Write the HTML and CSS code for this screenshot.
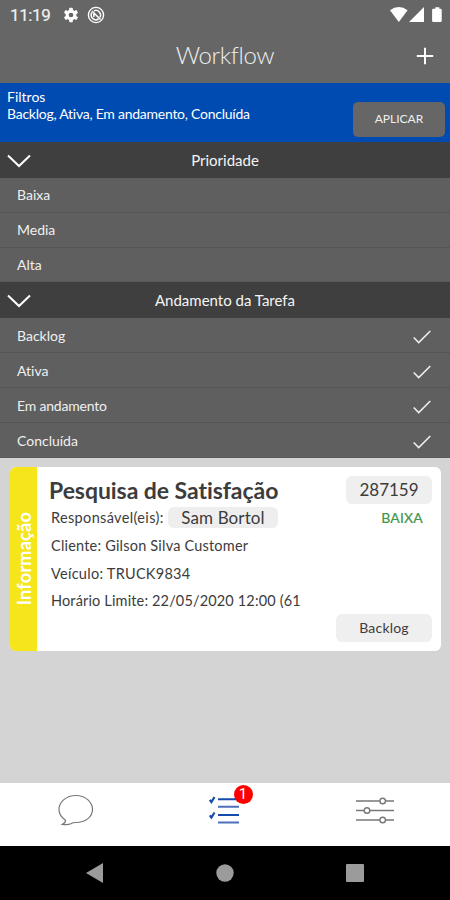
FILE: index.html
```html
<!DOCTYPE html>
<html lang="pt-BR">
<head>
<meta charset="utf-8">
<title>Workflow</title>
<link rel="stylesheet" href="styles.css">
</head>
<body>
<div class="app">
  <div class="status">
    <span class="time">11:19</span>
    <svg class="gear" width="16" height="16" viewBox="0 0 16 16"><g fill="#fff"><rect x="6.2" y=".8" width="3.6" height="14.4" rx=".8"/><rect x="6.2" y=".8" width="3.6" height="14.4" rx=".8" transform="rotate(60 8 8)"/><rect x="6.2" y=".8" width="3.6" height="14.4" rx=".8" transform="rotate(120 8 8)"/><circle cx="8" cy="8" r="5.4"/></g><circle cx="8" cy="8" r="2.3" fill="#666"/></svg>
    <svg class="dnd" width="18" height="18" viewBox="0 0 18 18" fill="none" stroke="#fff"><circle cx="9" cy="9" r="7.6" stroke-width="1.4"/><path d="M7 4.800a4.700 4.700 0 0 1 6 6.500M11.500 13A4.700 4.700 0 0 1 5 6.500" stroke-width="1.500"/><path d="M5 5l8.500 8.500M6.800 11V8.500h2" stroke-width="1.500"/></svg>
    <svg class="signals" width="52" height="16" viewBox="0 0 52 16" fill="#fff"><path d="M0 3.200Q8.800-3 17.600 3.200L8.800 15zM34 0v15H19zM43.300 1.800h2V.3h4v1.500h1.200q1.200 0 1.200 1.200v10.800q0 1.200-1.200 1.200h-7.200q-1.200 0-1.200-1.200V3q0-1.200 1.200-1.200z"/></svg>
  </div>
  <header class="header">
    <h1>Workflow</h1>
    <svg class="plus" width="18" height="18" viewBox="0 0 18 18" stroke="#fff" stroke-width="2"><path d="M9 .8v16.400M.8 9h16.400"/></svg>
  </header>
  <section class="filters">
    <div class="summary"><div>Filtros</div><div class="selected">Backlog, Ativa, Em andamento, Concluída</div></div>
    <button class="apply">APLICAR</button>
  </section>
  <section class="group">
    <h2><svg class="chev" width="24" height="14" viewBox="0 0 24 14"><path d="M1 1.500l11 10.500L23 1.500"/></svg><span class="prio">Prioridade</span></h2>
    <div class="row"><span>Baixa</span></div>
    <div class="row"><span>Media</span></div>
    <div class="row"><span>Alta</span></div>
  </section>
  <section class="group">
    <h2><svg class="chev" width="24" height="14" viewBox="0 0 24 14"><path d="M1 1.500l11 10.500L23 1.500"/></svg><span class="prog">Andamento da Tarefa</span></h2>
    <div class="row"><span>Backlog</span><svg class="check" width="18" height="14" viewBox="0 0 18 14"><path d="M.7 7.500l5 5L17.300 1"/></svg></div>
    <div class="row"><span>Ativa</span><svg class="check" width="18" height="14" viewBox="0 0 18 14"><path d="M.7 7.500l5 5L17.300 1"/></svg></div>
    <div class="row"><span class="wide">Em andamento</span><svg class="check" width="18" height="14" viewBox="0 0 18 14"><path d="M.7 7.500l5 5L17.300 1"/></svg></div>
    <div class="row"><span>Concluída</span><svg class="check" width="18" height="14" viewBox="0 0 18 14"><path d="M.7 7.500l5 5L17.300 1"/></svg></div>
  </section>
  <main class="content">
    <article class="card">
      <div class="kind"><span>Informação</span></div>
      <div class="body">
        <div class="line first"><h3>Pesquisa de Satisfação</h3><span class="number">287159</span></div>
        <div class="line second"><span class="resp">Responsável(eis):</span><span class="person">Sam Bortol</span><span class="level">BAIXA</span></div>
        <p class="client">Cliente: Gilson Silva Customer</p>
        <p class="vehicle">Veículo: TRUCK9834</p>
        <p class="limit">Horário Limite: 22/05/2020 12:00 (61</p>
        <span class="state">Backlog</span>
      </div>
    </article>
  </main>
  <nav class="tabs">
    <div class="tab"><svg width="38" height="34" viewBox="0 0 38 34" fill="none" stroke="#777" stroke-width="1.200"><path d="M9.500 26.200C5.500 23.500 3 19.800 3 15.500 3 7.800 10.300 1.500 19.800 1.500S36.500 7.800 36.500 15.500 29.200 28.500 19.800 28.500q-3 .1-5 1.200-3 1.300-8.300.6 3.200-1.300 3-4.100z"/></svg></div>
    <div class="tab"><div class="tasks"><svg width="34" height="32" viewBox="0 0 34 32" fill="none" stroke="#164bac"><path stroke-width="2" d="M10 4.300h21M10 20h21"/><path stroke="#4d70bd" stroke-width="2" d="M10 11.800h21M10 27.500h21"/><path stroke-width="2.200" d="M1.800 4.800l1.600 2.200L6.500 2M1.800 20.300l1.600 2.200L6.500 17.500"/></svg><span class="badge">1</span></div></div>
    <div class="tab"><svg width="40" height="30" viewBox="0 0 40 30" stroke="#777" stroke-width="1.400" fill="#fff"><path d="M1 5h38M1 14.500h38"/><path d="M1 24h38" stroke="#999" stroke-width="2"/><circle cx="27.700" cy="5" r="2.800"/><circle cx="12" cy="14.500" r="2.800"/><circle cx="27.700" cy="24" r="2.800"/></svg></div>
  </nav>
  <div class="system">
    <div class="key"><svg width="18" height="20" viewBox="0 0 18 20" fill="#9b9b9b"><path d="M0 10L17 0v20z"/></svg></div>
    <div class="key"><svg width="18" height="18" viewBox="0 0 18 18" fill="#9b9b9b"><circle cx="9" cy="9" r="8.700"/></svg></div>
    <div class="key"><svg width="18" height="18" viewBox="0 0 18 18" fill="#9b9b9b"><rect width="18" height="18" rx="1"/></svg></div>
  </div>
</div>
</body>
</html>
```
FILE: styles.css
```css
* { box-sizing: border-box; }
body { margin: 0; font-family: Lato, sans-serif; color: #3c3c3c; font-variant-ligatures: none; }
h1, h2, h3, p { margin: 0; font-weight: 400; }
svg { display: block; flex: none; }
span { white-space: nowrap; }
.app { width: 450px; height: 900px; display: flex; flex-direction: column; overflow: hidden; background: #d4d4d4; }
.status { height: 29px; flex: none; display: flex; align-items: center; background: #666; padding: 0 8px 0 10px; }
.time { width: 53px; font: 400 17px/28px Roboto, sans-serif; color: #f0f0f0; letter-spacing: -.4px; -webkit-text-stroke: .2px #f0f0f0; }
.dnd { margin-left: 8px; }
.signals { margin-left: auto; }
.header { height: 54px; flex: none; display: grid; grid-template-columns: 1fr auto 1fr; align-items: center; background: #666; padding: 0 16px; }
.header h1 { grid-column: 2; font-size: 24px; line-height: 30px; padding-bottom: 2px; font-weight: 300; color: #eee; letter-spacing: -.4px; font-variant-ligatures: normal; }
.plus { justify-self: end; }
.filters { height: 59px; flex: none; display: flex; justify-content: space-between; background: #004bb1; color: #fff; padding: 5px 5px 0 7px; }
.summary { font-size: 14px; line-height: 17px; }
.selected { letter-spacing: -.25px; }
.apply { width: 92px; height: 35px; margin-top: 14px; padding: 0 0 2px; border: 0; border-radius: 5px; background: #666; color: #eee; font: 400 12px Lato, sans-serif; }
.group { flex: none; }
.group h2 { height: 36px; display: grid; grid-template-columns: 24px 1fr 24px; align-items: center; padding: 0 7px; background: #3f3f3f; color: #f4f4f4; font-size: 15px; text-align: center; }
.chev, .check { fill: none; stroke: #fff; stroke-width: 2; }
.chev { margin-top: 1px; }
.check { stroke-width: 1.600; stroke: #eee; margin-top: 3px; }
.row { height: 35px; display: flex; align-items: center; justify-content: space-between; padding: 0 19px 0 17px; border-bottom: 1px solid #555; background: #5f5f5f; color: #f0f0f0; font-size: 14px; }
.wide { letter-spacing: -.2px; }
.group .row:last-child { border-bottom-color: #595959; }
.group:nth-of-type(2) .row:last-child { height: 34px; }
.group:nth-of-type(2) .row:not(:last-child) { padding-bottom: 1px; }
.content { flex: 1; padding: 9px 9px 0 10px; }
.card { height: 184px; display: flex; background: #fff; border-radius: 6px; overflow: hidden; }
.kind { width: 27px; background: #f7e51b; color: #fff; display: flex; align-items: center; justify-content: center; }
.kind span { writing-mode: vertical-rl; transform: rotate(180deg); font-weight: 700; font-size: 18px; letter-spacing: .25px; }
.body { flex: 1; display: flex; flex-direction: column; padding: 9px 9px 9px 12px; }
.line { display: flex; align-items: center; justify-content: space-between; }
.first { height: 28px; }
.body h3 { font-size: 23px; font-weight: 700; line-height: 28px; letter-spacing: -.06px; }
.number { width: 86px; height: 28px; line-height: 28px; background: #efefef; border-radius: 6px; text-align: center; font-size: 17px; }
.second { height: 28px; padding: 0 9px 2px 2px; justify-content: flex-start; font-size: 14.500px; }
.resp { width: 117px; letter-spacing: .35px; }
.person { width: 110px; height: 21px; line-height: 21px; border-radius: 6px; background: #eee; text-align: center; font-size: 17px; letter-spacing: .1px; }
.level { margin-left: auto; color: #42964a; font-size: 14px; letter-spacing: .2px; -webkit-text-stroke: .2px #42964a; }
.body p { font-size: 14.500px; line-height: 27.500px; padding-left: 2px; white-space: nowrap; letter-spacing: .15px; }
.body .client { letter-spacing: .2px; }
.body .vehicle { letter-spacing: .27px; }
.state { align-self: flex-end; width: 96px; height: 28px; line-height: 28px; margin-top: -.500px; border-radius: 6px; background: #efefef; text-align: center; font-size: 14px; letter-spacing: .2px; }
.tabs { height: 63px; flex: none; display: grid; grid-template-columns: repeat(3, 1fr); background: #fff; }
.tab { display: grid; place-items: center; padding-bottom: 8px; }
.tasks { position: relative; }
.badge { position: absolute; left: 25.500px; top: -10px; width: 19px; height: 19px; border-radius: 50%; background: #fe0000; color: #fff; text-align: center; font: 15px/19px Roboto, sans-serif; }
.system { height: 54px; flex: none; display: grid; grid-template-columns: 130px 130px 130px; justify-content: center; background: #000; }
.key { display: grid; place-items: center; }
```
